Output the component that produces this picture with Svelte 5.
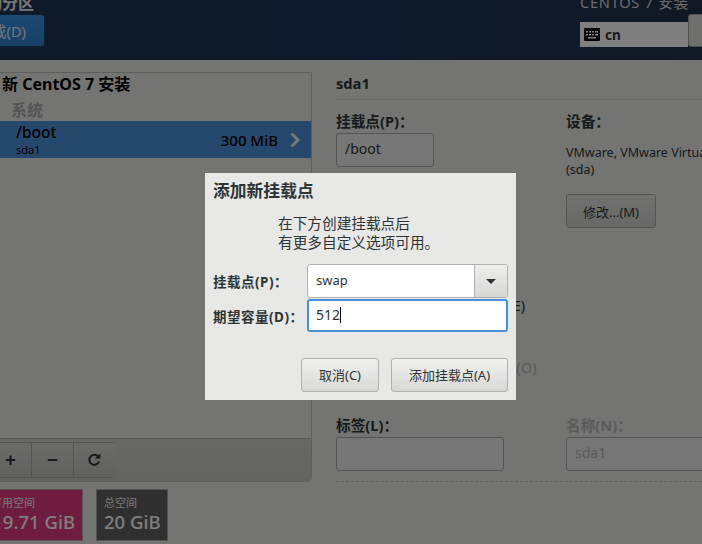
<script>
  const toolbar = ['+', '−'];
</script>

<div class="screen">
  <header class="topbar">
    <div class="top-left">
      <h1>手动分区</h1>
      <button class="done">完成(D)</button>
    </div>
    <div class="top-right">
      <div class="product">CENTOS 7 安装</div>
      <div class="kb-row">
        <div class="kb">
          <svg width="16" height="13" viewBox="0 0 16 13">
            <rect width="16" height="13" rx="1" fill="#000" />
            <g fill="#fff">
              <rect x="2" y="3" width="2" height="1.5" /><rect x="5" y="3" width="2" height="1.5" /><rect x="8" y="3" width="2" height="1.5" /><rect x="11" y="3" width="3" height="1.5" />
              <rect x="2" y="6" width="2" height="1.5" /><rect x="5" y="6" width="2" height="1.5" /><rect x="8" y="6" width="2" height="1.5" /><rect x="11" y="6" width="3" height="1.5" />
              <rect x="4" y="9" width="8" height="1.5" />
            </g>
          </svg>
          <span>cn</span>
        </div>
        <button class="help">帮助(H)</button>
      </div>
    </div>
  </header>

  <main class="body">
    <section class="left">
      <div class="panel">
        <div class="panel-title">新 CentOS 7 安装</div>
        <div class="group">系统</div>
        <div class="row">
          <div class="row-name">
            <div class="mount">/boot</div>
            <div class="dev">sda1</div>
          </div>
          <div class="size">300 MiB</div>
          <svg class="chev" width="12" height="16" viewBox="0 0 12 16">
            <path d="M2.5 1.5 L9 8 L2.5 14.5" fill="none" stroke="#f0f0f0" stroke-width="3" />
          </svg>
        </div>
        <div class="spacer"></div>
        <div class="tools">
          <div class="tool-group">
            {#each toolbar as t}
              <button class="tool">{t}</button>
            {/each}
            <button class="tool" aria-label="刷新">
              <svg width="14" height="14" viewBox="0 0 14 14">
                <path d="M11.6 4.2 A5 5 0 1 0 12 8.6" fill="none" stroke="#2e3436" stroke-width="2" />
                <path d="M7.8 5.6 L13.4 5.6 L13.4 0.4 Z" fill="#2e3436" />
              </svg>
            </button>
          </div>
        </div>
      </div>
      <div class="cards">
        <div class="card avail">
          <div class="card-label">可用空间</div>
          <div class="card-value">19.71 GiB</div>
        </div>
        <div class="card total">
          <div class="card-label">总空间</div>
          <div class="card-value">20 GiB</div>
        </div>
      </div>
    </section>

    <section class="right">
      <div class="part-title">sda1</div>
      <div class="form">
        <div class="col-a">
          <div class="label">挂载点(P)：</div>
          <div class="entry short">/boot</div>
          <div class="encrypt">加密(E)</div>
          <div class="reformat">重新格式化(O)</div>
          <div class="label tag-label">标签(L)：</div>
          <div class="entry wide"></div>
        </div>
        <div class="col-b">
          <div class="label">设备：</div>
          <div class="device">VMware, VMware Virtual S<br />(sda)</div>
          <button class="modify">修改...(M)</button>
          <div class="label off name-label">名称(N)：</div>
          <div class="entry wide off">sda1</div>
        </div>
      </div>
      <div class="dashed"></div>
    </section>
  </main>

  <div class="backdrop">
    <div class="dialog">
      <h2>添加新挂载点</h2>
      <p>在下方创建挂载点后<br />有更多自定义选项可用。</p>
      <div class="field first">
        <div class="dlg-label">挂载点(P)：</div>
        <div class="combo">
          <div class="combo-text">swap</div>
          <div class="combo-btn"><span class="arrow"></span></div>
        </div>
      </div>
      <div class="field">
        <div class="dlg-label">期望容量(D)：</div>
        <div class="capacity">512<span class="cursor"></span></div>
      </div>
      <div class="actions">
        <button class="dlg-btn cancel">取消(C)</button>
        <button class="dlg-btn add">添加挂载点(A)</button>
      </div>
    </div>
  </div>
</div>

<style>
  :global(body) {
    margin: 0;
    background: #e8e8e7;
  }

  .screen {
    position: relative;
    width: 702px;
    height: 544px;
    overflow: hidden;
    background: #e8e8e7;
    color: #2e3436;
    font-family: "Noto Sans", "Noto Sans CJK SC", sans-serif;
    font-size: 14.67px;
  }

  button {
    font-family: inherit;
    padding: 0;
    cursor: pointer;
  }

  .topbar {
    height: 60px;
    display: flex;
    justify-content: space-between;
    background: linear-gradient(90deg, #1c3454 0%, #1d3556 55%, #22304a 100%);
    overflow: hidden;
  }

  .top-left {
    margin-left: -30px;
  }

  h1 {
    margin: -10px 0 0;
    height: 24px;
    line-height: 26px;
    font-size: 16px;
    font-weight: 700;
    color: #f0f0f0;
  }

  .done {
    display: block;
    width: 75px;
    height: 33px;
    text-align: right;
    padding-right: 18px;
    box-sizing: border-box;
    color: #e8eef5;
    font-size: 14.67px;
    background: linear-gradient(#3a90e0, #3080cc);
    border: 1px solid #1c3e60;
    border-radius: 3px;
  }

  .top-right {
    width: 122px;
  }

  .product {
    margin-top: -9px;
    height: 23px;
    line-height: 23px;
    font-size: 14.67px;
    letter-spacing: 0.7px;
    color: #d6d6d6;
  }

  .kb-row {
    display: flex;
    align-items: flex-end;
    height: 33px;
  }

  .kb {
    box-sizing: border-box;
    width: 108px;
    height: 25px;
    flex: none;
    display: flex;
    align-items: center;
    gap: 5px;
    padding-left: 4px;
    background: #fff;
    font-size: 13.5px;
    font-weight: 700;
    color: #2e3436;
  }

  .help {
    flex: none;
    width: 60px;
    height: 33px;
    text-align: left;
    padding-left: 20px;
    background: #e0e0de;
    border: 1px solid #a0a0a0;
    border-radius: 3px;
    color: #2e3436;
  }

  .body {
    display: flex;
    height: 484px;
  }

  .left {
    width: 356px;
    flex: none;
    padding-top: 12px;
    margin-left: -20px;
  }

  .panel {
    box-sizing: border-box;
    width: 332px;
    height: 410px;
    display: flex;
    flex-direction: column;
    border: 1px solid #bcbcbc;
    border-radius: 0 0 5px 5px;
    overflow: hidden;
  }

  .panel-title {
    height: 26px;
    line-height: 20px;
    padding-left: 21px;
    font-size: 16px;
    font-weight: 700;
    color: #000;
    margin-top: 1px;
  }

  .group {
    height: 21px;
    line-height: 20px;
    padding-left: 30px;
    font-size: 16px;
    font-weight: 700;
    color: #a9a9a9;
  }

  .row {
    height: 37px;
    display: flex;
    align-items: center;
    background: #4a90d9;
    padding-left: 35px;
    padding-right: 10px;
    color: #000;
  }

  .row-name {
    flex: 1;
  }

  .mount {
    font-size: 15.5px;
    font-weight: 500;
    line-height: 20px;
  }

  .dev {
    font-size: 11px;
    line-height: 15px;
    margin-bottom: 1px;
  }

  .size {
    font-size: 15px;
    font-weight: 500;
    margin-right: 11px;
  }

  .spacer {
    flex: 1;
  }

  .tools {
    height: 43px;
    border-top: 1px solid #a8a8a8;
    background: linear-gradient(#d0d0cc, #c6c6c2);
    box-sizing: border-box;
    padding-top: 3px;
  }

  .tool-group {
    display: flex;
    width: 136px;
    height: 36px;
    margin-left: -2px;
    border: 1px solid #a8a8a8;
    border-radius: 3px;
    box-sizing: border-box;
  }

  .tool {
    width: 42px;
    height: 100%;
    background: linear-gradient(#d6d6d4, #c2c2c0);
    border: 0;
    border-right: 1px solid #a8a8a8;
    font-size: 19px;
    font-weight: 700;
    color: #2e3436;
    display: flex;
    align-items: center;
    justify-content: center;
    flex: none;
  }

  .tool:first-child {
    width: 52px;
    padding-left: 10px;
  }

  .tool:last-child {
    border-right: 0;
    padding-right: 3px;
  }

  .cards {
    display: flex;
    gap: 13px;
    margin-top: 7px;
  }

  .card {
    box-sizing: border-box;
    height: 52px;
    border: 1px solid #a8a8a8;
    padding: 6px 7px 0;
    color: #fff;
    white-space: nowrap;
    overflow: hidden;
  }

  .avail {
    width: 103px;
    background: #dd3a80;
    text-align: right;
  }

  .total {
    width: 72px;
    background: #606060;
  }

  .card-label {
    font-size: 11px;
    line-height: 14px;
    text-align: left;
    color: #f0f0f0;
  }

  .avail .card-label {
    padding-left: 3px;
  }

  .card-value {
    font-size: 18.5px;
    font-weight: 500;
    line-height: 24px;
  }

  .right {
    flex: 1;
    min-width: 0;
    padding-top: 12px;
    overflow: hidden;
  }

  .part-title {
    height: 27px;
    line-height: 22px;
    font-weight: 700;
    font-size: 14.67px;
    border-bottom: 1px solid #c8c8c8;
  }

  .form {
    display: flex;
    padding-top: 11px;
  }

  .col-a {
    width: 230px;
    flex: none;
  }

  .col-b {
    flex: 1;
    white-space: nowrap;
  }

  .label {
    height: 21px;
    line-height: 20px;
    font-size: 14.67px;
    font-weight: 700;
  }

  .entry {
    box-sizing: border-box;
    height: 34px;
    line-height: 30px;
    padding-left: 8px;
    margin-top: 1px;
    background: #ededed;
    border: 1px solid #a8a8a8;
    border-radius: 3px;
    font-size: 14px;
  }

  .short {
    width: 98px;
  }

  .wide {
    width: 168px;
  }

  .encrypt {
    margin-top: 128px;
    margin-left: 143px;
    height: 20px;
    line-height: 20px;
  }

  .reformat {
    margin-top: 42px;
    margin-left: 107px;
    height: 20px;
    line-height: 20px;
    color: #b4b4b4;
  }

  .tag-label {
    margin-top: 38px;
  }

  .device {
    margin-top: 12px;
    line-height: 17px;
    font-size: 12.5px;
  }

  .modify {
    display: block;
    margin-top: 16px;
    box-sizing: border-box;
    width: 90px;
    height: 34px;
    background: linear-gradient(#e4e4e2, #cfcfcd);
    border: 1px solid #a8a8a8;
    border-radius: 3px;
    color: #2e3436;
    font-size: 13px;
  }

  .name-label {
    margin-top: 187px;
  }

  .off {
    color: #b4b4b4;
  }

  .entry.off {
    width: 170px;
  }

  .dashed {
    margin-top: 10px;
    border-top: 1px dashed #bcbcbc;
  }

  .backdrop {
    position: absolute;
    inset: 0;
    background: rgba(0, 0, 0, 0.5);
  }

  .dialog {
    position: absolute;
    left: 205px;
    top: 173px;
    box-sizing: border-box;
    width: 311px;
    height: 227px;
    padding: 8px;
    display: flex;
    flex-direction: column;
    background: #e8e8e7;
    color: #2e3436;
  }

  h2 {
    margin: 0;
    font-size: 16.8px;
    font-weight: 700;
    line-height: 20px;
  }

  p {
    margin: 13px 0 0 65px;
    line-height: 19px;
    font-size: 14.67px;
  }

  .field {
    display: flex;
    align-items: flex-start;
    height: 34px;
  }

  .field.first {
    margin-top: 12px;
    margin-bottom: 1px;
  }

  .dlg-label {
    width: 94px;
    flex: none;
    font-size: 13.5px;
    font-weight: 700;
    line-height: 36px;
    letter-spacing: 0.5px;
    white-space: nowrap;
  }

  .combo {
    flex: 1;
    height: 34px;
    display: flex;
    box-sizing: border-box;
    border: 1px solid #b0b0ae;
    border-radius: 3px;
    background: #fff;
  }

  .combo-text {
    flex: 1;
    line-height: 31px;
    padding-left: 8px;
    font-size: 13px;
  }

  .combo-btn {
    width: 32px;
    border-left: 1px solid #b0b0ae;
    background: linear-gradient(#eeeeec, #d8d8d6);
    display: flex;
    align-items: center;
    justify-content: center;
    border-radius: 0 3px 3px 0;
  }

  .arrow {
    width: 0;
    height: 0;
    border-left: 5px solid transparent;
    border-right: 5px solid transparent;
    border-top: 5px solid #2e3436;
  }

  .capacity {
    box-sizing: border-box;
    flex: 1;
    height: 33px;
    line-height: 28px;
    padding-left: 7px;
    font-size: 14px;
    border: 2px solid #4a90d9;
    border-radius: 3px;
    background: #fff;
  }

  .cursor {
    display: inline-block;
    width: 1px;
    height: 16px;
    background: #000;
    vertical-align: -3px;
  }

  .actions {
    display: flex;
    justify-content: flex-end;
    gap: 12px;
    margin-top: auto;
  }

  .dlg-btn {
    box-sizing: border-box;
    height: 34px;
    padding-bottom: 2px;
    background: linear-gradient(#f0f0ee, #d8d8d6);
    border: 1px solid #b0b0ae;
    border-radius: 3px;
    color: #2e3436;
    font-size: 13px;
  }

  .cancel {
    width: 78px;
  }

  .add {
    width: 117px;
  }
</style>
